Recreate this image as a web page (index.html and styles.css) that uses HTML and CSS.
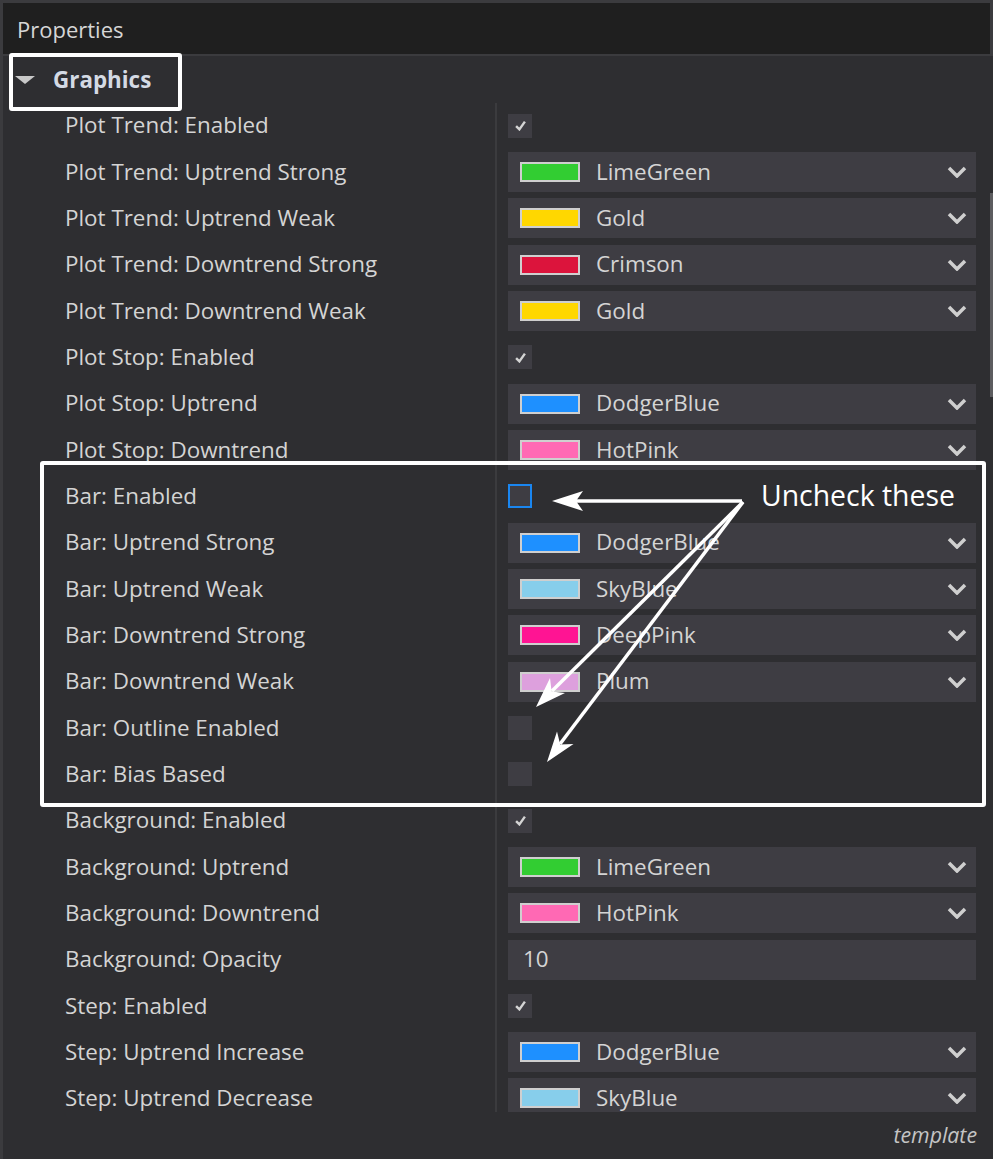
FILE: index.html
```html
<!DOCTYPE html>
<html lang="en">
<head>
    <meta charset="UTF-8">
    <title>Properties</title>
    <link rel="stylesheet" href="styles.css">
</head>
<body>
    <div class="frame">
        <div class="header">Properties</div>

        <div class="section">
            <span class="caret"></span>
            <span class="section-title">Graphics</span>
        </div>

        <div class="rows">
            <div class="row"><div class="label">Plot Trend: Enabled</div><div class="value"><span class="check on"><svg viewBox="0 0 10 10"><polyline points="1,5.5 4,8.5 9,1.5"/></svg></span></div></div>
            <div class="row"><div class="label">Plot Trend: Uptrend Strong</div><div class="value"><div class="select"><span class="swatch" style="background:#32cd32"></span><span class="name">LimeGreen</span><svg class="chev" viewBox="0 0 20 12"><polyline points="2,2 10,10 18,2"/></svg></div></div></div>
            <div class="row"><div class="label">Plot Trend: Uptrend Weak</div><div class="value"><div class="select"><span class="swatch" style="background:#ffd700"></span><span class="name">Gold</span><svg class="chev" viewBox="0 0 20 12"><polyline points="2,2 10,10 18,2"/></svg></div></div></div>
            <div class="row"><div class="label">Plot Trend: Downtrend Strong</div><div class="value"><div class="select"><span class="swatch" style="background:#dc143c"></span><span class="name">Crimson</span><svg class="chev" viewBox="0 0 20 12"><polyline points="2,2 10,10 18,2"/></svg></div></div></div>
            <div class="row"><div class="label">Plot Trend: Downtrend Weak</div><div class="value"><div class="select"><span class="swatch" style="background:#ffd700"></span><span class="name">Gold</span><svg class="chev" viewBox="0 0 20 12"><polyline points="2,2 10,10 18,2"/></svg></div></div></div>
            <div class="row"><div class="label">Plot Stop: Enabled</div><div class="value"><span class="check on"><svg viewBox="0 0 10 10"><polyline points="1,5.5 4,8.5 9,1.5"/></svg></span></div></div>
            <div class="row"><div class="label">Plot Stop: Uptrend</div><div class="value"><div class="select"><span class="swatch" style="background:#1e90ff"></span><span class="name">DodgerBlue</span><svg class="chev" viewBox="0 0 20 12"><polyline points="2,2 10,10 18,2"/></svg></div></div></div>
            <div class="row"><div class="label">Plot Stop: Downtrend</div><div class="value"><div class="select"><span class="swatch" style="background:#ff69b4"></span><span class="name">HotPink</span><svg class="chev" viewBox="0 0 20 12"><polyline points="2,2 10,10 18,2"/></svg></div></div></div>
            <div class="row"><div class="label">Bar: Enabled</div><div class="value"><span class="check focus"></span></div></div>
            <div class="row"><div class="label">Bar: Uptrend Strong</div><div class="value"><div class="select"><span class="swatch" style="background:#1e90ff"></span><span class="name">DodgerBlue</span><svg class="chev" viewBox="0 0 20 12"><polyline points="2,2 10,10 18,2"/></svg></div></div></div>
            <div class="row"><div class="label">Bar: Uptrend Weak</div><div class="value"><div class="select"><span class="swatch" style="background:#87ceeb"></span><span class="name">SkyBlue</span><svg class="chev" viewBox="0 0 20 12"><polyline points="2,2 10,10 18,2"/></svg></div></div></div>
            <div class="row"><div class="label">Bar: Downtrend Strong</div><div class="value"><div class="select"><span class="swatch" style="background:#ff1493"></span><span class="name">DeepPink</span><svg class="chev" viewBox="0 0 20 12"><polyline points="2,2 10,10 18,2"/></svg></div></div></div>
            <div class="row"><div class="label">Bar: Downtrend Weak</div><div class="value"><div class="select"><span class="swatch" style="background:#dda0dd"></span><span class="name">Plum</span><svg class="chev" viewBox="0 0 20 12"><polyline points="2,2 10,10 18,2"/></svg></div></div></div>
            <div class="row"><div class="label">Bar: Outline Enabled</div><div class="value"><span class="check"></span></div></div>
            <div class="row"><div class="label">Bar: Bias Based</div><div class="value"><span class="check"></span></div></div>
            <div class="row"><div class="label">Background: Enabled</div><div class="value"><span class="check on"><svg viewBox="0 0 10 10"><polyline points="1,5.5 4,8.5 9,1.5"/></svg></span></div></div>
            <div class="row"><div class="label">Background: Uptrend</div><div class="value"><div class="select"><span class="swatch" style="background:#32cd32"></span><span class="name">LimeGreen</span><svg class="chev" viewBox="0 0 20 12"><polyline points="2,2 10,10 18,2"/></svg></div></div></div>
            <div class="row"><div class="label">Background: Downtrend</div><div class="value"><div class="select"><span class="swatch" style="background:#ff69b4"></span><span class="name">HotPink</span><svg class="chev" viewBox="0 0 20 12"><polyline points="2,2 10,10 18,2"/></svg></div></div></div>
            <div class="row"><div class="label">Background: Opacity</div><div class="value"><div class="textbox">10</div></div></div>
            <div class="row"><div class="label">Step: Enabled</div><div class="value"><span class="check on"><svg viewBox="0 0 10 10"><polyline points="1,5.5 4,8.5 9,1.5"/></svg></span></div></div>
            <div class="row"><div class="label">Step: Uptrend Increase</div><div class="value"><div class="select"><span class="swatch" style="background:#1e90ff"></span><span class="name">DodgerBlue</span><svg class="chev" viewBox="0 0 20 12"><polyline points="2,2 10,10 18,2"/></svg></div></div></div>
            <div class="row cut"><div class="label">Step: Uptrend Decrease</div><div class="value"><div class="select"><span class="swatch" style="background:#87ceeb"></span><span class="name">SkyBlue</span><svg class="chev" viewBox="0 0 20 12"><polyline points="2,2 10,10 18,2"/></svg></div></div></div>
        </div>

        <div class="footer">template</div>

        <div class="scroll-thumb"></div>

        <!-- annotations drawn over the screenshot -->
        <div class="mark mark-graphics"></div>
        <div class="mark mark-bar"></div>
        <div class="note">Uncheck these</div>
        <svg class="arrows" viewBox="0 0 993 1159">
            <line x1="742" y1="501" x2="576" y2="501"/>
            <polygon points="552,501 583,491 576,501 583,511"/>
            <line x1="743" y1="502" x2="552" y2="691"/>
            <polygon points="536,707 550,678 551.6,691.5 565,693"/>
            <line x1="743" y1="502" x2="560" y2="744"/>
            <polygon points="547,762 557,731.5 560.2,744.4 573.5,744"/>
        </svg>
    </div>
</body>
</html>
```

FILE: styles.css
```css
html, body {
    margin: 0;
    padding: 0;
}

body {
    background: #2e2e31;
    font-family: 'Open Sans', 'Noto Sans', sans-serif;
    color: #d4d4d4;
}

.frame {
    position: relative;
    width: 993px;
    height: 1159px;
    box-sizing: border-box;
    border-top: 3px solid #3b3b3e;
    border-left: 3px solid #3b3b3e;
    overflow: hidden;
    display: flex;
    flex-direction: column;
}

.header {
    height: 53px;
    flex: none;
    box-sizing: border-box;
    background: #1f1f1f;
    border-bottom: 2px solid #3b3b3e;
    border-right: 3px solid #3b3b3e;
    padding-left: 14px;
    font-size: 22px;
    line-height: 53px;
    color: #d6d6d6;
}

.section {
    height: 46.5px;
    flex: none;
    display: flex;
    align-items: center;
    padding-left: 12px;
}

.caret {
    width: 0;
    height: 0;
    border-left: 10px solid transparent;
    border-right: 10px solid transparent;
    border-top: 8px solid #c8c8c8;
    margin-right: 18px;
    margin-top: 1px;
}

.section-title {
    font-size: 22.4px;
    font-weight: bold;
    color: #d4dae4;
}

.rows {
    height: 1007.5px;
    flex: none;
}

.row {
    display: grid;
    grid-template-columns: 492px 1fr;
    height: 46.33px;
}

.label {
    display: flex;
    align-items: center;
    padding-left: 62px;
    font-size: 22.4px;
    line-height: 1;
    white-space: nowrap;
}

.value {
    display: flex;
    align-items: center;
    border-left: 2px solid #3b3b3e;
    padding-left: 11px;
    padding-right: 17px;
}

/* last row is cut by the bottom of the scroll area */
.row.cut .value {
    box-sizing: border-box;
    height: 37px;
    padding-top: 3px;
    align-items: flex-start;
    overflow: hidden;
}

.check {
    width: 24px;
    height: 24px;
    box-sizing: border-box;
    background: #3e3d43;
    display: flex;
    align-items: center;
    justify-content: center;
}

.check svg {
    width: 11px;
    height: 11px;
    fill: none;
    stroke: #d4d4d4;
    stroke-width: 2.2;
}

.check.focus {
    border: 2px solid #1a86f0;
}

.select, .textbox {
    flex: 1;
    height: 40px;
    flex-shrink: 0;
    background: #3e3d43;
    display: flex;
    align-items: center;
    font-size: 22.4px;
    line-height: 1;
    color: #d4d4d4;
}

.select {
    padding-left: 12px;
    padding-right: 9px;
}

.textbox {
    padding-left: 15px;
}

.swatch {
    width: 60px;
    height: 20px;
    box-sizing: border-box;
    border: 2px solid #cfcfcf;
    margin-right: 16px;
}

.name {
    flex: 1;
}

.chev {
    width: 20px;
    height: 12px;
    fill: none;
    stroke: #cfcfcf;
    stroke-width: 3.5;
}

.footer {
    flex: 1;
    text-align: right;
    padding-right: 16px;
    padding-top: 10px;
    font-size: 21.3px;
    font-style: italic;
    color: #c4c4c4;
}

.scroll-thumb {
    position: absolute;
    left: 987px;
    top: 190px;
    width: 3px;
    height: 204px;
    background: #5c5c5f;
}

.mark {
    position: absolute;
    border: 4px solid #ffffff;
    border-radius: 3px;
}

.mark-graphics {
    left: 6px;
    top: 50px;
    width: 165px;
    height: 50px;
}

.mark-bar {
    left: 37px;
    top: 458px;
    width: 938px;
    height: 338px;
}

.note {
    position: absolute;
    left: 758px;
    top: 473px;
    font-size: 28.4px;
    color: #ffffff;
}

.arrows {
    position: absolute;
    left: -3px;
    top: -3px;
    width: 993px;
    height: 1159px;
    pointer-events: none;
}

.arrows line {
    stroke: #ffffff;
    stroke-width: 3.5;
}

.arrows polygon {
    fill: #ffffff;
}
```
